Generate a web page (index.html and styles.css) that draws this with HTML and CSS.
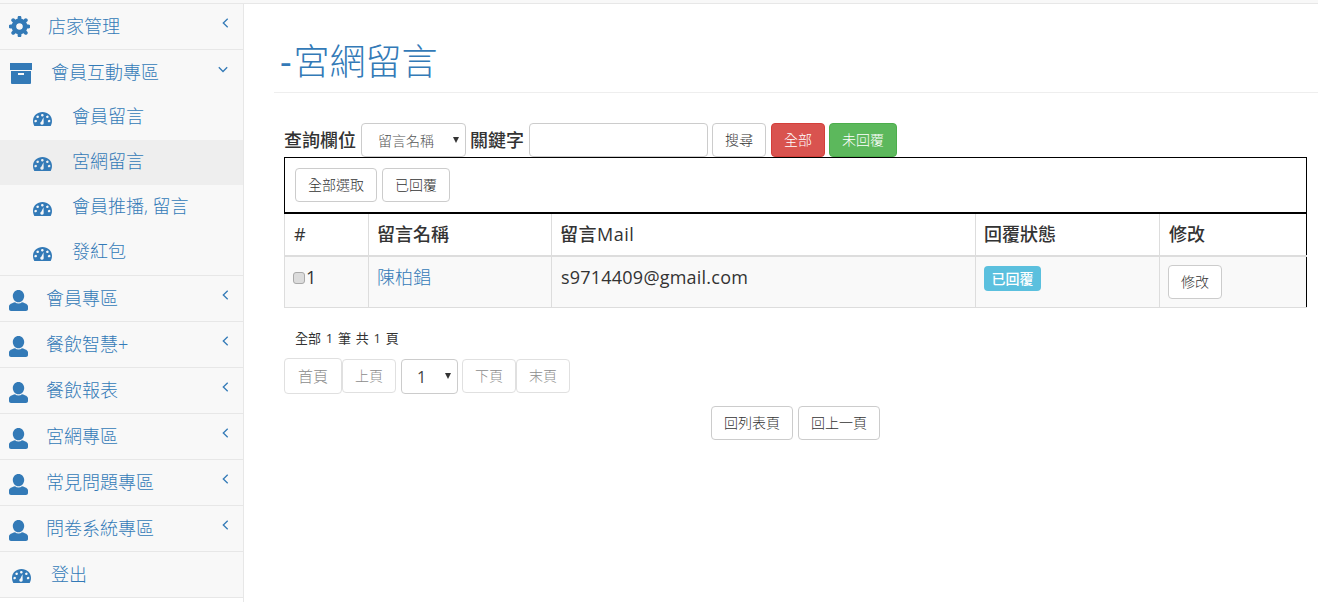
FILE: index.html
```html
<!DOCTYPE html>
<html lang="zh-Hant">
<head>
<meta charset="utf-8">
<title>宮網留言</title>
<link rel="stylesheet" href="styles.css">
</head>
<body>
<svg class="defs" width="0" height="0" aria-hidden="true">
  <symbol id="i-gear" viewBox="0 0 21 21">
    <circle cx="10.5" cy="10.5" r="5.6" fill="none" stroke="currentColor" stroke-width="4.6"/>
    <path d="M10.5 1.6v3.5M10.5 15.9v3.5M1.6 10.5h3.5M15.9 10.5h3.5M4.2 4.2l2.5 2.5M14.3 14.3l2.5 2.5M16.8 4.2l-2.5 2.5M6.7 14.3l-2.5 2.5" fill="none" stroke="currentColor" stroke-width="3.8" stroke-linecap="round"/>
  </symbol>
  <symbol id="i-box" viewBox="0 0 22 21">
    <path fill="currentColor" d="M0 0h22v7H0zM1 8h20v12a1 1 0 0 1-1 1H2a1 1 0 0 1-1-1zM8 10v2h6v-2z" fill-rule="evenodd"/>
  </symbol>
  <symbol id="i-dash" viewBox="0 0 19 15" preserveAspectRatio="none">
    <path fill="currentColor" fill-rule="evenodd" d="M9.500 0C14.700 0 19 4.100 19 9.300c0 2.100-.5 4-1.300 5.700H1.300C.5 13.300 0 11.400 0 9.300 0 4.100 4.300 0 9.500 0zM9 2.200a1.300 1.300 0 1 0 1.600 1 1.300 1.300 0 0 0-1.600-1zM4.300 3.900a1.300 1.300 0 1 0 1.600 1 1.300 1.300 0 0 0-1.600-1zM14 3.900a1.300 1.300 0 1 0 1.600 1 1.300 1.300 0 0 0-1.600-1zM2.300 8.500a1.300 1.300 0 1 0 1.600 1 1.300 1.300 0 0 0-1.600-1zM15.800 8.500a1.300 1.300 0 1 0 1.600 1 1.300 1.300 0 0 0-1.600-1zM10.500 5.500 8.300 10.500a1.700 1.700 0 1 0 2.400 1.500z"/>
  </symbol>
  <symbol id="i-user" viewBox="0 0 19 21">
    <path fill="currentColor" d="M9.500 0c3.300 0 5.700 2.700 5.700 6s-2.400 6.300-5.700 6.300S3.800 9.300 3.800 6 6.200 0 9.500 0zM6 12.300c1 .8 2.200 1.200 3.500 1.200s2.500-.4 3.500-1.200c3.300.9 6 2 6 4.200v2.500c0 1.100-.9 2-2 2H2c-1.100 0-2-.9-2-2v-2.500c0-2.200 2.700-3.300 6-4.200z"/>
  </symbol>
  <symbol id="i-left" viewBox="0 0 7 10">
    <path d="M5.700.8 1.300 5l4.400 4.200" fill="none" stroke="currentColor" stroke-width="1.300"/>
  </symbol>
  <symbol id="i-down" viewBox="0 0 10 7">
    <path d="M.8 1.300 5 5.500l4.200-4.200" fill="none" stroke="currentColor" stroke-width="1.300"/>
  </symbol>
</svg>

<div class="topbar"></div>
<div class="page">
  <aside class="sidebar">
    <ul class="menu">
      <li class="row row-first">
        <svg class="ic ic-gear"><use href="#i-gear"/></svg><span>店家管理</span>
        <svg class="chev"><use href="#i-left"/></svg>
      </li>
      <li class="group">
        <div class="row row-open">
          <svg class="ic ic-box"><use href="#i-box"/></svg><span>會員互動專區</span>
          <svg class="chev-down"><use href="#i-down"/></svg>
        </div>
        <div class="row sub"><svg class="ic ic-dash"><use href="#i-dash"/></svg><span>會員留言</span></div>
        <div class="row sub active"><svg class="ic ic-dash"><use href="#i-dash"/></svg><span>宮網留言</span></div>
        <div class="row sub"><svg class="ic ic-dash"><use href="#i-dash"/></svg><span>會員推播, 留言</span></div>
        <div class="row sub"><svg class="ic ic-dash"><use href="#i-dash"/></svg><span>發紅包</span></div>
      </li>
      <li class="row"><svg class="ic ic-user"><use href="#i-user"/></svg><span>會員專區</span><svg class="chev"><use href="#i-left"/></svg></li>
      <li class="row"><svg class="ic ic-user"><use href="#i-user"/></svg><span>餐飲智慧+</span><svg class="chev"><use href="#i-left"/></svg></li>
      <li class="row"><svg class="ic ic-user"><use href="#i-user"/></svg><span>餐飲報表</span><svg class="chev"><use href="#i-left"/></svg></li>
      <li class="row"><svg class="ic ic-user"><use href="#i-user"/></svg><span>宮網專區</span><svg class="chev"><use href="#i-left"/></svg></li>
      <li class="row"><svg class="ic ic-user"><use href="#i-user"/></svg><span>常見問題專區</span><svg class="chev"><use href="#i-left"/></svg></li>
      <li class="row"><svg class="ic ic-user"><use href="#i-user"/></svg><span>問卷系統專區</span><svg class="chev"><use href="#i-left"/></svg></li>
      <li class="row row-logout"><svg class="ic ic-dash"><use href="#i-dash"/></svg><span>登出</span></li>
    </ul>
  </aside>

  <main class="main">
    <h1 class="title"><span class="dash">-</span>宮網留言</h1>
    <div class="content">
      <form class="search">
        <label class="lbl">查詢欄位</label>
        <span class="select-wrap"><select class="select select-field"><option>留言名稱</option></select></span>
        <label class="lbl">關鍵字</label>
        <input class="input" type="text">
        <button class="btn" type="button">搜尋</button>
        <button class="btn btn-red" type="button">全部</button>
        <button class="btn btn-green" type="button">未回覆</button>
      </form>
      <div class="toolbar">
        <button class="btn" type="button">全部選取</button>
        <button class="btn" type="button">已回覆</button>
      </div>
      <table class="grid">
        <colgroup>
          <col class="c1"><col class="c2"><col class="c3"><col class="c4"><col class="c5">
        </colgroup>
        <thead>
          <tr><th>#</th><th>留言名稱</th><th class="th-mail">留言Mail</th><th>回覆狀態</th><th>修改</th></tr>
        </thead>
        <tbody>
          <tr>
            <td><input class="check" type="checkbox">1</td>
            <td><a class="link" href="#">陳柏錩</a></td>
            <td class="mail">s9714409@gmail.com</td>
            <td><span class="badge">已回覆</span></td>
            <td class="td-btn"><button class="btn" type="button">修改</button></td>
          </tr>
        </tbody>
      </table>
      <p class="count">全部 1 筆 共 1 頁</p>
      <div class="pager">
        <button class="btn btn-off btn-first" type="button">首頁</button>
        <button class="btn btn-off" type="button">上頁</button>
        <span class="select-wrap pager-sel"><select class="select select-page"><option>1</option></select></span>
        <button class="btn btn-off" type="button">下頁</button>
        <button class="btn btn-off" type="button">末頁</button>
      </div>
      <div class="back">
        <button class="btn" type="button">回列表頁</button>
        <button class="btn" type="button">回上一頁</button>
      </div>
    </div>
  </main>
</div>
</body>
</html>
```
FILE: styles.css
```css
* { box-sizing: border-box; }
html, body { margin: 0; height: 100%; overflow: hidden; background: #fff; }
body {
  font-family: "Open Sans", "Noto Sans CJK TC", sans-serif;
  font-size: 14px;
  color: #333;
}
.defs { position: absolute; }
.topbar { height: 4px; background: #f8f8f8; border-bottom: 1px solid #e7e7e7; }
.page { display: flex; height: 598px; }

.sidebar { width: 244px; flex: none; border-right: 1px solid #e7e7e7; }
.menu { list-style: none; margin: 0; padding: 0; background: #f8f8f8; }
.menu > li { border-bottom: 1px solid #e7e7e7; }
.row {
  display: flex;
  align-items: center;
  height: 46px;
  padding-left: 9px;
  font-size: 18px;
  color: #337ab7;
  font-weight: 300;
}
.row span { margin: 0 0 4px -1px; }
.row-first { height: 46px; }
.row-first span { margin-left: 0; }
.row-open { height: 45px; padding-left: 10px; }
.sub { height: 45px; padding-left: 33px; }
.sub span { margin-bottom: 6px; }
.active { background: #eee; }
.row-logout { padding-left: 12px; }
.ic { flex: none; fill: currentColor; }
.ic-gear { width: 21px; height: 21px; margin-right: 18px; }
.ic-box { width: 22px; height: 21px; margin-right: 20px; margin-top: 2px; }
.ic-dash { width: 19px; height: 14px; margin-right: 21px; margin-top: 2px; }
.ic-user { width: 19px; height: 21px; margin-right: 19px; margin-top: 3px; }
.chev { width: 7px; height: 10px; margin-left: auto; margin-right: 14px; margin-bottom: 7px; }
.chev-down { width: 10px; height: 7px; margin-left: auto; margin-right: 15px; margin-bottom: 6px; }

.main { flex: 1; min-width: 0; padding: 0 0 0 30px; }
.title {
  margin: 0;
  height: 89px;
  padding: 34px 0 0 6px;
  font-size: 36px;
  line-height: 48px;
  font-weight: 300;
  color: #337ab7;
  border-bottom: 1px solid #eee;
}
.dash { margin-right: 2px; font-weight: 400; }
.content { padding: 30px 11px 0 10px; }

.search { display: flex; align-items: center; height: 34px; }
.lbl { font-size: 18px; font-weight: 500; line-height: 34px; }
.select-wrap { position: relative; display: inline-block; }
.select-wrap::after {
  content: "";
  position: absolute;
  right: 7px;
  top: 14px;
  border-left: 3.5px solid transparent;
  border-right: 3.5px solid transparent;
  border-top: 6px solid #333;
  pointer-events: none;
}
.select {
  display: block;
  appearance: none;
  -webkit-appearance: none;
  background: #fff;
  border: 1px solid #ccc;
  border-radius: 4px;
  height: 34px;
  color: #555;
  font-family: inherit;
  font-weight: 300;
}
.select-field { width: 105px; padding-left: 16px; font-size: 14px; }
.search .select-wrap { margin: 0 4px 0 5px; }
.input {
  width: 179px;
  height: 34px;
  margin: 0 4px 0 5px;
  border: 1px solid #ccc;
  border-radius: 4px;
  background: #fff;
}

.btn {
  display: inline-block;
  height: 34px;
  padding: 0 12px;
  font-family: inherit;
  font-size: 14px;
  font-weight: 300;
  line-height: 20px;
  color: #333;
  background: #fff;
  border: 1px solid #ccc;
  border-radius: 4px;
  white-space: nowrap;
}
.search .btn { margin-right: 5px; }
.search .btn-red { margin-right: 4px; }
.btn-red { background: #d9534f; border-color: #d43f3a; color: #fff; }
.btn-green { background: #5cb85c; border-color: #4cae4c; color: #fff; }

.toolbar {
  display: flex;
  gap: 5px;
  height: 56px;
  padding: 10px;
  border: 1px solid #000;
}

.grid {
  width: 1022px;
  border-collapse: collapse;
  table-layout: fixed;
  border-top: 2px solid #000;
  margin-top: -1px;
}
.c1 { width: 84px; }
.c2 { width: 183px; }
.c3 { width: 424px; }
.c4 { width: 184px; }
.c5 { width: 147px; }
.grid th, .grid td {
  border-left: 1px solid #ddd;
  text-align: left;
  vertical-align: top;
  padding: 8px 8px;
  font-size: 18px;
  line-height: 24px;
}
.grid th { height: 43px; font-weight: 500; border-bottom: 2px solid #ddd; }
.grid th:first-child, .grid th:last-child { padding-left: 9px; }
.grid .th-mail { letter-spacing: .5px; }
.grid td { height: 50px; background: #f9f9f9; border-bottom: 1px solid #ddd; }
.grid th:last-child, .grid td:last-child { border-right: 1px solid #000; }
.grid .mail { letter-spacing: .22px; padding-left: 9px; }
.link { color: #337ab7; text-decoration: none; font-weight: 300; }
.check {
  appearance: none;
  -webkit-appearance: none;
  width: 12px;
  height: 12px;
  margin: 0 1px 0 0;
  background: #dcdcdc;
  border: 1px solid #aaa;
  border-radius: 3px;
}
.badge {
  display: inline-block;
  vertical-align: top;
  height: 25px;
  margin-top: 1px;
  padding: 0 7.5px;
  font-size: 14px;
  line-height: 25px;
  font-weight: 500;
  color: #fff;
  background: #5bc0de;
  border-radius: 4px;
}

.count { margin: 20px 0 0 11px; font-size: 13px; line-height: 20px; word-spacing: 1.4px; }
.pager { display: flex; align-items: flex-start; margin-top: 10px; }
.btn-off { color: #8c8c8c; border-color: #e0e0e0; margin-top: 1px; }
.btn-first { height: 36px; margin-top: 0; padding: 0 13px; font-size: 15px; }
.pager-sel { margin: 1px 4px 0 5px; }
.select-page { width: 57px; height: 35px; padding-left: 15px; font-size: 16px; font-weight: 400; color: #444; }
.back { display: flex; justify-content: center; gap: 5px; margin-top: 12px; }
```
